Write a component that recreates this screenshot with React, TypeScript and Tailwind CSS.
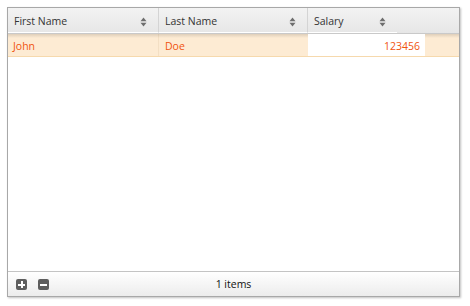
import React from 'react';

const font = { fontFamily: '"Open Sans", "Liberation Sans", sans-serif' };

function SortIcon() {
    return (
        <svg width="7" height="10" viewBox="0 0 7 10" className="shrink-0">
            <path d="M3.5 0.5 L6.5 4.2 L0.5 4.2 Z" fill="#6e6e6e" />
            <path d="M3.5 9.5 L6.5 5.8 L0.5 5.8 Z" fill="#6e6e6e" />
        </svg>
    );
}

function HeaderCell({ label, width, last }: { label: string; width: string; last?: boolean }) {
    return (
        <div
            className={`${width} h-full flex items-center justify-between pl-[6px] pr-[11px] pt-[3px] border-b border-b-white ${last ? '' : 'border-r border-[#d4d4d4]'}`}
        >
            <span className="text-[10.5px] text-[#333]">{label}</span>
            <SortIcon />
        </div>
    );
}

function SquareButton({ minus }: { minus?: boolean }) {
    return (
        <div className="w-[11px] h-[11px] rounded-[2px] bg-[#5e5e5e] flex items-center justify-center relative">
            <div className="w-[7px] h-[2px] bg-white" />
            {!minus && <div className="absolute w-[2px] h-[7px] bg-white" />}
        </div>
    );
}

export default function App() {
    return (
        <div className="w-[470px] h-[306px] bg-white pt-[7px] pl-[7px]" style={font}>
            <div className="w-[453px] h-[290px] border border-[#a8a8a8] flex flex-col shadow-[1px_1px_2px_rgba(0,0,0,0.25)] bg-white">
                {/* header */}
                <div className="h-[26px] flex bg-gradient-to-b from-[#f3f3f3] to-[#e6e6e6] border-b border-[#c9c9c9] shrink-0">
                    <HeaderCell label="First Name" width="w-[151px]" />
                    <HeaderCell label="Last Name" width="w-[149px]" />
                    <HeaderCell label="Salary" width="w-[89px]" last />
                    <div className="flex-1" />
                </div>

                {/* row */}
                <div className="h-[23px] flex bg-[#fdebd3] border-b border-[#f6d9ad] shrink-0 relative">
                    <div className="absolute left-0 right-0 top-0 h-[4px] bg-gradient-to-b from-[rgba(0,0,0,0.12)] to-transparent" />
                    <div className="w-[151px] flex items-center pl-[5px] pt-[3px] text-[10.5px] text-[#f05410] border-r border-[#f3dfc4]">
                        John
                    </div>
                    <div className="w-[149px] flex items-center pl-[6px] pt-[3px] text-[10.5px] text-[#f05410]">
                        Doe
                    </div>
                    <div className="w-[117px] bg-white flex items-center justify-end pr-[5px] pt-[3px] text-[10.5px] text-[#f05410] relative">
                        123456
                    </div>
                    <div className="flex-1" />
                </div>

                <div className="flex-1" />

                {/* footer */}
                <div className="h-[25px] border-t border-[#c4c4c4] bg-gradient-to-b from-white to-[#ececec] flex items-center relative shrink-0">
                    <div className="flex items-center gap-[11px] pl-[8px] pt-[1px]">
                        <SquareButton />
                        <SquareButton minus />
                    </div>
                    <div className="absolute left-0 right-0 text-center text-[10.5px] text-[#111] pt-[1px]">
                        1 items
                    </div>
                </div>
            </div>
        </div>
    );
}
